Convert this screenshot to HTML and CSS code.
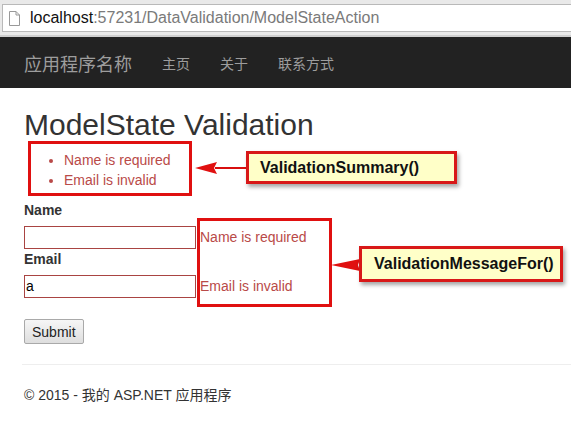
FILE: index.html
```html
<!DOCTYPE html>
<html lang="zh-CN">
<head>
  <meta charset="UTF-8" />
  <title>ModelState Validation</title>
  <link rel="stylesheet" href="styles.css">
</head>
<body>
  <div class="addressbar">
    <div class="url-field">
      <svg class="page-icon" width="11" height="15" viewBox="0 0 11 15">
        <path d="M0.5 0.5 H7 L10.5 4 V14.5 H0.5 Z" fill="#fff" stroke="#999" />
        <path d="M7 0.5 V4 H10.5" fill="none" stroke="#999" />
      </svg>
      <span class="host">localhost</span><span class="path">:57231/DataValidation/ModelStateAction</span>
    </div>
  </div>

  <div class="navbar">
    <a class="brand" href="#">应用程序名称</a>
    <a class="nav-link" href="#">主页</a>
    <a class="nav-link" href="#">关于</a>
    <a class="nav-link" href="#">联系方式</a>
  </div>

  <div class="container">
    <h2>ModelState Validation</h2>
    <div class="validation-summary">
      <ul>
        <li>Name is required</li>
        <li>Email is invalid</li>
      </ul>
    </div>

    <form class="form">
      <label>Name</label>
      <div class="field">
        <input type="text" class="input-error" value=""><span class="field-error">Name is required</span>
      </div>
      <label>Email</label>
      <div class="field">
        <input type="text" class="input-error" value="a"><span class="field-error">Email is invalid</span>
      </div>
      <button type="button" class="submit">Submit</button>
    </form>

    <hr>
    <footer>© 2015 - 我的 ASP.NET 应用程序</footer>

    <!-- annotations drawn over the page -->
    <div class="mark mark-summary"></div>
    <div class="mark mark-fields"></div>
    <svg class="arrow arrow-summary" width="54" height="14" viewBox="0 0 54 14">
      <path d="M20 6 H53 V8 H20 Z" fill="#d80f0f" />
      <path d="M0 7 L22 1 L19 7 L22 13 Z" fill="#e01010" />
    </svg>
    <svg class="arrow arrow-fields" width="30" height="16" viewBox="0 0 30 16">
      <path d="M0 8 L29 2 L27 8 L29 14 Z" fill="#e01010" />
    </svg>
    <div class="callout callout-summary">ValidationSummary()</div>
    <div class="callout callout-fields">ValidationMessageFor()</div>
  </div>
</body>
</html>
```

FILE: styles.css
```css
* { box-sizing: border-box; }
body { margin: 0; font-family: "Liberation Sans", Arial, "Noto Sans CJK SC", sans-serif; font-size: 14px; line-height: 20px; color: #333; background: #fff; }

.addressbar { height: 37px; background: #e9e9e9; padding: 4px 0 4px 2px; border-bottom: 2px solid #cfcfcf; }
.url-field { height: 28px; background: #fff; border: 1px solid #b9b9b9; border-right: none; display: flex; align-items: center; padding-left: 6px; font-size: 16px; }
.page-icon { margin-right: 10px; }
.host { color: #111; }
.path { color: #7a7a7a; }

.navbar { height: 51px; background: #222; display: flex; align-items: center; padding-left: 9px; font-family: "Noto Sans CJK SC", sans-serif; }
.navbar a { text-decoration: none; color: #9d9d9d; padding: 0 15px; }
.brand { font-size: 18px; }
.nav-link { font-size: 14px; }

.container { position: relative; padding: 20px 0 0 24px; }
h2 { margin: 0; font-size: 30px; font-weight: 500; line-height: 33px; color: #333; }
.validation-summary { color: #b94a48; padding-top: 9px; }
.validation-summary ul { margin: 0; padding-left: 40px; }

.form { margin-top: 10px; }
label { display: block; font-weight: bold; margin-bottom: 5px; }
.field { display: flex; align-items: center; height: 24px; }
.input-error { width: 172px; height: 23px; border: 1px solid #a94442; padding: 1px 1px; font-family: "Liberation Sans", Arial, sans-serif; font-size: 14px; color: #000; margin: 0; }
.field-error { color: #b94a48; margin-left: 4px; }
.submit { margin-top: 21px; height: 25px; padding: 0 7px; font-family: "Liberation Sans", Arial, sans-serif; font-size: 14px; color: #222; background: linear-gradient(#f6f6f6, #dedede); border: 1px solid #a9a9a9; border-radius: 2px; }

hr { margin: 20px 0 0 -2px; border: 0; border-top: 1px solid #eee; }
footer { margin-top: 20px; font-family: "Liberation Sans", Arial, "Noto Sans CJK SC", sans-serif; }

.mark { position: absolute; border: 3px solid #e01010; }
.mark-summary { left: 28px; top: 53px; width: 164px; height: 55px; }
.mark-fields { left: 197px; top: 130px; width: 135px; height: 89px; }
.arrow { position: absolute; }
.arrow-summary { left: 195px; top: 73px; }
.arrow-fields { left: 331px; top: 169px; }
.callout { position: absolute; background: #ffffc8; border: 3px solid #d81818; box-shadow: 2px 3px 4px rgba(0,0,0,0.35); font-weight: bold; font-size: 16px; color: #111; display: flex; align-items: center; }
.callout-summary { left: 246px; top: 63px; width: 211px; height: 33px; padding-left: 11px; }
.callout-fields { left: 359px; top: 158px; width: 204px; height: 36px; padding-left: 12px; }
```
